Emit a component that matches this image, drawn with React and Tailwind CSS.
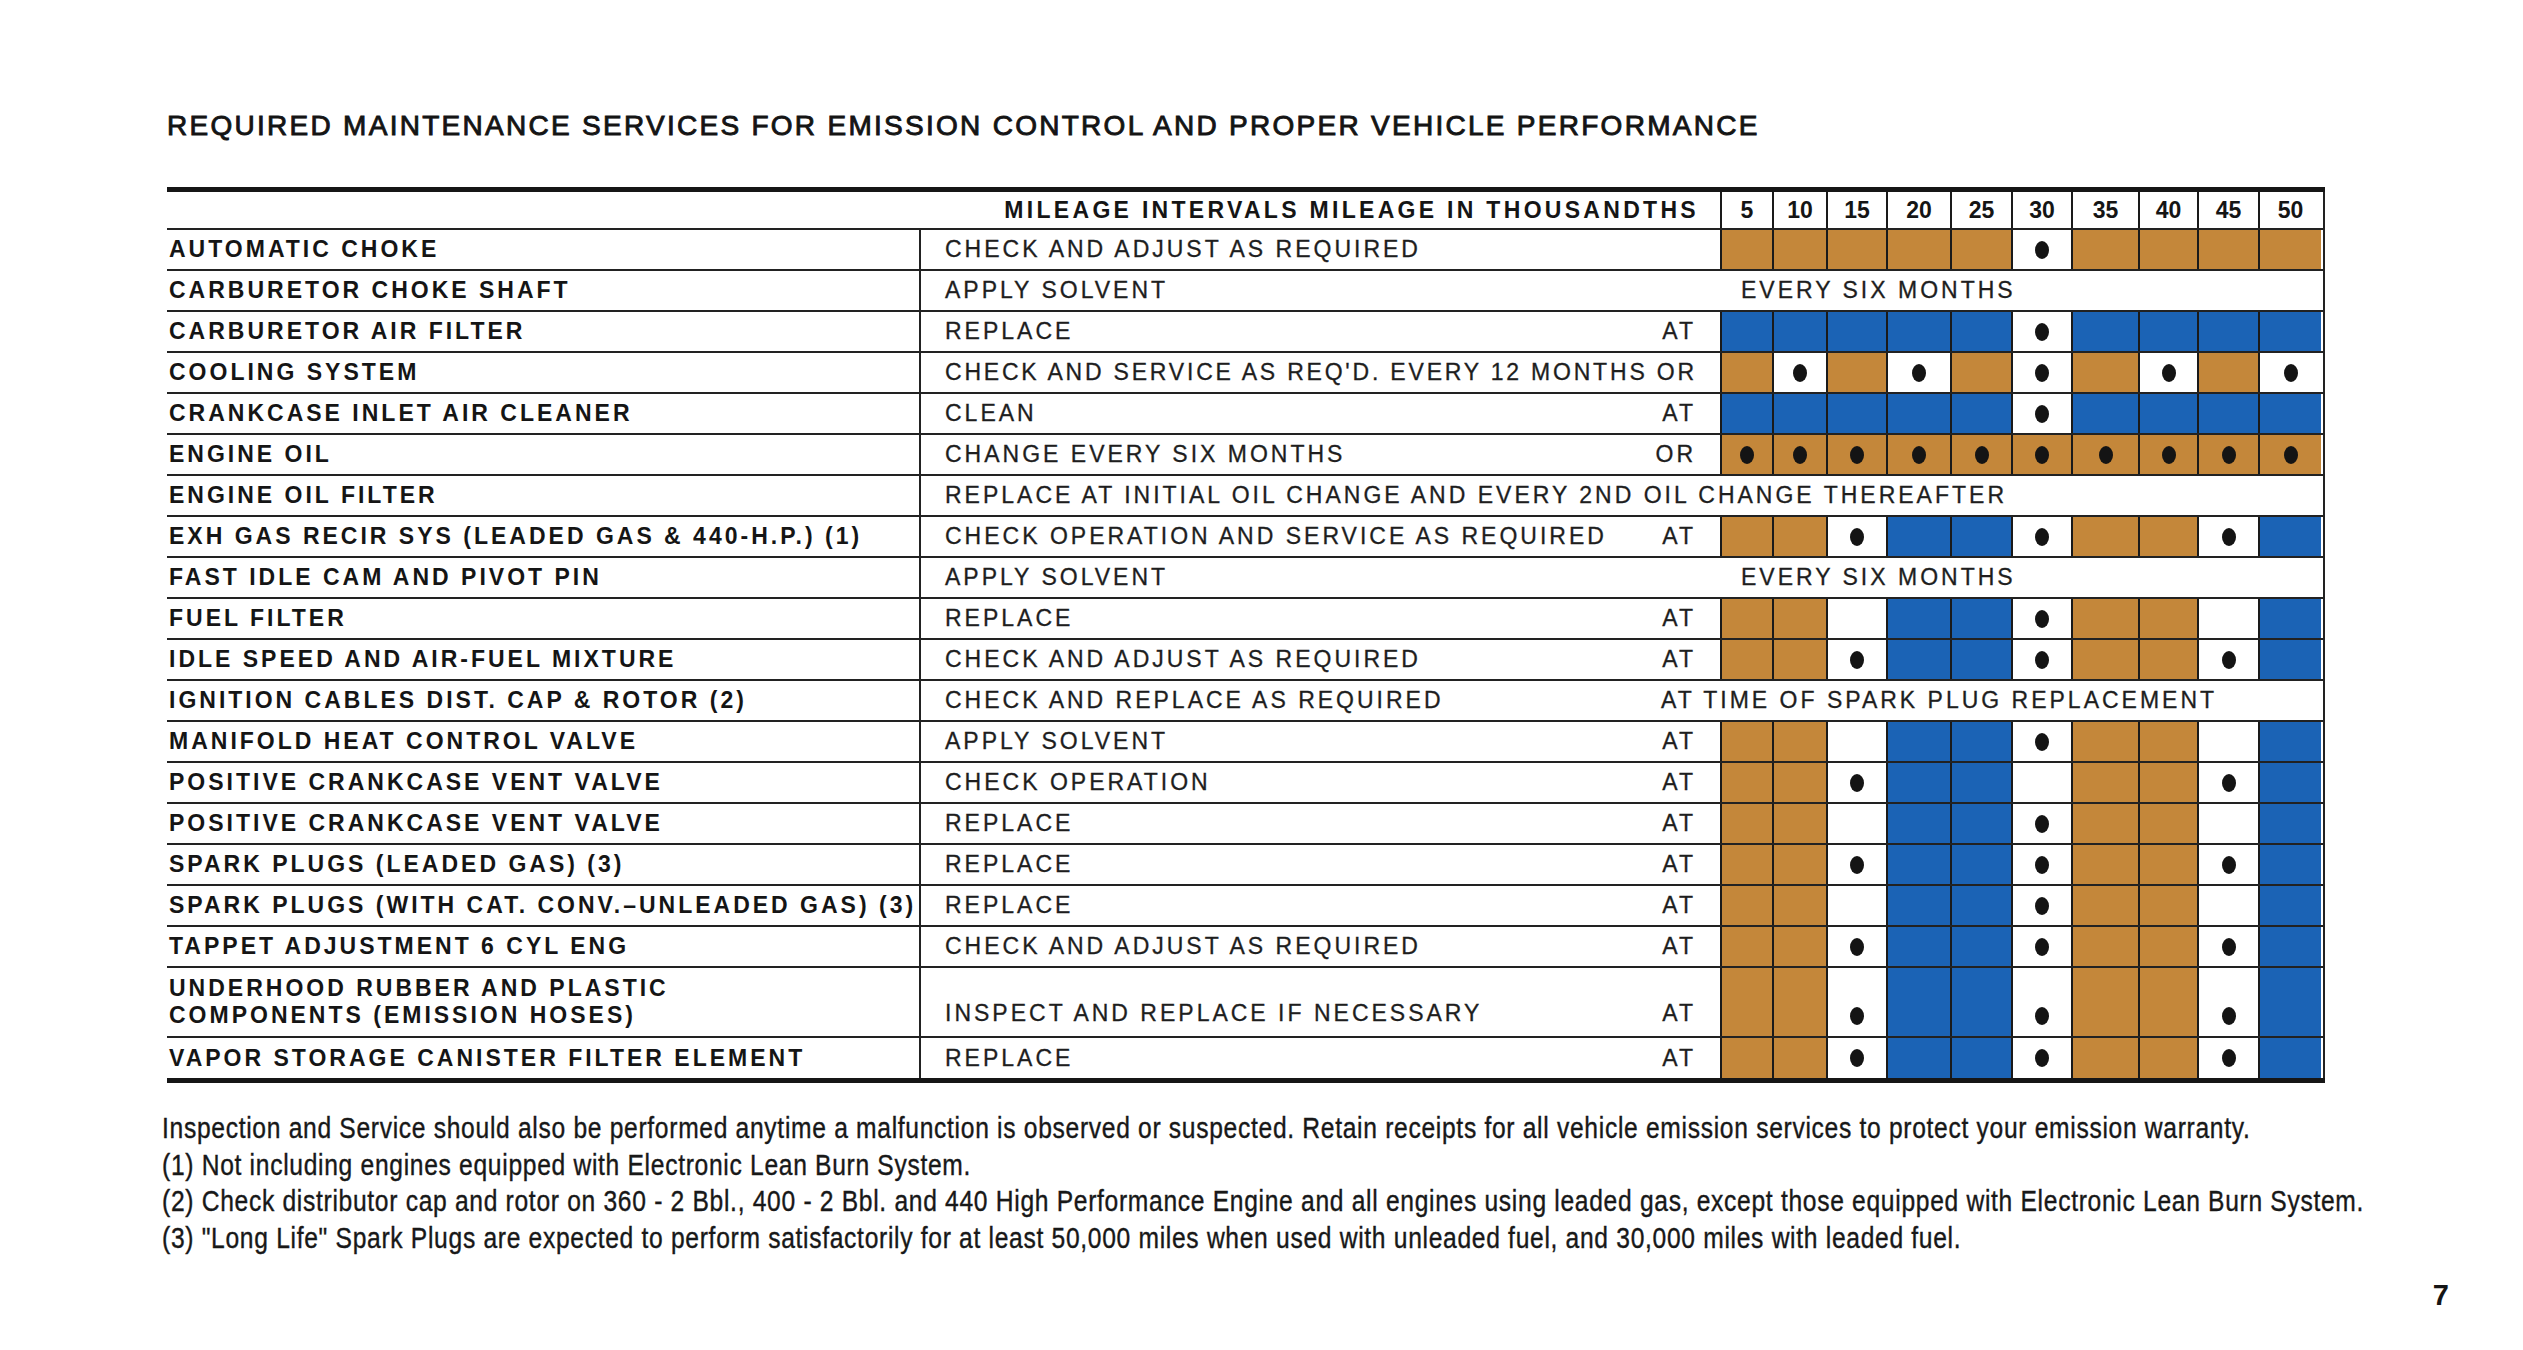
const COLS = [
  "w-[52px]",
  "w-[54px]",
  "w-[60px]",
  "w-[64px]",
  "w-[61px]",
  "w-[60px]",
  "w-[67px]",
  "w-[59px]",
  "w-[61px]",
  "w-[63px]",
];
const MILES = ["5", "10", "15", "20", "25", "30", "35", "40", "45", "50"];

// T tan, B blue, W white, D white with dot, O tan with dot
const FILL = {
  T: "bg-[#c4873a]",
  B: "bg-[#1b63b5]",
  W: "bg-white",
  D: "bg-white",
  O: "bg-[#c4873a]",
};

const ROWS = [
  { item: "AUTOMATIC CHOKE", desc: "CHECK AND ADJUST AS REQUIRED", cells: "TTTTTDTTTT" },
  { item: "CARBURETOR CHOKE SHAFT", desc: "APPLY SOLVENT", every: "EVERY SIX MONTHS" },
  { item: "CARBURETOR AIR FILTER", desc: "REPLACE", at: "AT", cells: "BBBBBDBBBB" },
  {
    item: "COOLING SYSTEM",
    desc: "CHECK AND SERVICE AS REQ'D. EVERY 12 MONTHS OR",
    cells: "TDTDTDTDTD",
    tight: true,
  },
  { item: "CRANKCASE INLET AIR CLEANER", desc: "CLEAN", at: "AT", cells: "BBBBBDBBBB" },
  { item: "ENGINE OIL", desc: "CHANGE EVERY SIX MONTHS", at: "OR", cells: "OOOOOOOOOO" },
  { item: "ENGINE OIL FILTER", full: "REPLACE AT INITIAL OIL CHANGE AND EVERY 2ND OIL CHANGE THEREAFTER" },
  { item: "EXH GAS RECIR SYS (LEADED GAS & 440-H.P.) (1)", desc: "CHECK OPERATION AND SERVICE AS REQUIRED", at: "AT", cells: "TTDBBDTTDB" },
  { item: "FAST IDLE CAM AND PIVOT PIN", desc: "APPLY SOLVENT", every: "EVERY SIX MONTHS" },
  { item: "FUEL FILTER", desc: "REPLACE", at: "AT", cells: "TTWBBDTTWB" },
  { item: "IDLE SPEED AND AIR-FUEL MIXTURE", desc: "CHECK AND ADJUST AS REQUIRED", at: "AT", cells: "TTDBBDTTDB" },
  { item: "IGNITION CABLES DIST. CAP & ROTOR (2)", desc: "CHECK AND REPLACE AS REQUIRED", tail: "AT TIME OF SPARK PLUG REPLACEMENT" },
  { item: "MANIFOLD HEAT CONTROL VALVE", desc: "APPLY SOLVENT", at: "AT", cells: "TTWBBDTTWB" },
  { item: "POSITIVE CRANKCASE VENT VALVE", desc: "CHECK OPERATION", at: "AT", cells: "TTDBBWTTDB" },
  { item: "POSITIVE CRANKCASE VENT VALVE", desc: "REPLACE", at: "AT", cells: "TTWBBDTTWB" },
  { item: "SPARK PLUGS (LEADED GAS) (3)", desc: "REPLACE", at: "AT", cells: "TTDBBDTTDB" },
  { item: "SPARK PLUGS (WITH CAT. CONV.–UNLEADED GAS) (3)", desc: "REPLACE", at: "AT", cells: "TTWBBDTTWB" },
  { item: "TAPPET ADJUSTMENT 6 CYL ENG", desc: "CHECK AND ADJUST AS REQUIRED", at: "AT", cells: "TTDBBDTTDB" },
  {
    item: ["UNDERHOOD RUBBER AND PLASTIC", "COMPONENTS (EMISSION HOSES)"],
    desc: "INSPECT AND REPLACE IF NECESSARY",
    at: "AT",
    cells: "TTDBBDTTDB",
    tall: true,
  },
  { item: "VAPOR STORAGE CANISTER FILTER ELEMENT", desc: "REPLACE", at: "AT", cells: "TTDBBDTTDB", last: true },
];

const Dot = () => <div className="w-[14px] h-[18px] rounded-[50%] bg-[#141414]" />;

const Row = ({ r }) => {
  const height = r.tall ? "h-[70px]" : r.last ? "h-[40px]" : "h-[41px]";
  const border = r.last ? "" : "border-b-2 border-[#222]";
  const itemLines = Array.isArray(r.item) ? r.item : [r.item];
  const descText = "text-[23px] text-[#1e1e1e] whitespace-nowrap [-webkit-text-stroke:0.3px_#1e1e1e]";

  return (
    <div className={`flex ${height} ${border}`}>
      <div className="w-[752px] pl-[2px] flex flex-col justify-center font-bold text-[23px] leading-[27px] tracking-[3px] text-[#151515] whitespace-nowrap">
        {itemLines.map((line) => (
          <div key={line}>{line}</div>
        ))}
      </div>

      {r.full ? (
        <div className={`flex-1 border-l-2 border-r-2 border-[#222] pl-[24px] flex items-center tracking-[3px] ${descText}`}>
          {r.full}
        </div>
      ) : r.tail ? (
        <div className={`flex-1 border-l-2 border-r-2 border-[#222] pl-[24px] flex items-center tracking-[3px] ${descText}`}>
          <div className="w-[716px]">{r.desc}</div>
          <div>{r.tail}</div>
        </div>
      ) : (
        <>
          <div
            className={`w-[801px] border-l-2 border-[#222] pl-[24px] pr-[24px] flex justify-between ${descText} ${
              r.tight ? "tracking-[2.8px]" : "tracking-[3px]"
            } ${r.tall ? "items-end pb-[6px]" : "items-center"}`}
          >
            <span>{r.desc}</span>
            {r.at && <span>{r.at}</span>}
          </div>
          {r.every ? (
            <div className={`w-[605px] border-r-2 border-[#222] pl-[21px] flex items-center tracking-[3px] ${descText}`}>
              {r.every}
            </div>
          ) : (
            <div className="w-[605px] flex border-r-2 border-[#222]">
              {r.cells.split("").map((c, i) => (
                <div
                  key={i}
                  className={`${COLS[i]} ${FILL[c]} border-l-2 border-[#1a1a1a] flex justify-center ${
                    r.tall ? "items-end pb-[11px]" : "items-center"
                  }`}
                >
                  {(c === "D" || c === "O") && <Dot />}
                </div>
              ))}
            </div>
          )}
        </>
      )}
    </div>
  );
};

const App = () => {
  return (
    <div className="w-[2523px] h-[1350px] bg-white font-['Liberation_Sans',Arial,sans-serif] text-[#151515] overflow-hidden">
      <div className="pl-[167px] pt-[108px]">
        <h1 className="h-[36px] leading-[36px] text-[28px] tracking-[2.28px] text-[#141414] whitespace-nowrap [-webkit-text-stroke:0.9px_#141414]">
          REQUIRED MAINTENANCE SERVICES FOR EMISSION CONTROL AND PROPER VEHICLE PERFORMANCE
        </h1>

        <div className="mt-[43px] w-[2158px] border-t-[5px] border-b-[5px] border-[#161616]">
          <div className="flex h-[38px] border-b-2 border-[#222]">
            <div className="w-[1553px] flex items-center justify-end pr-[21px] font-bold text-[23px] tracking-[3.3px] whitespace-nowrap">
              MILEAGE INTERVALS MILEAGE IN THOUSANDTHS
            </div>
            <div className="w-[605px] flex border-r-2 border-[#222]">
              {MILES.map((m, i) => (
                <div
                  key={m}
                  className={`${COLS[i]} border-l-2 border-[#1a1a1a] flex items-center justify-center font-bold text-[23px]`}
                >
                  {m}
                </div>
              ))}
            </div>
          </div>
          {ROWS.map((r, i) => (
            <Row key={i} r={r} />
          ))}
        </div>

        <div className="mt-[27px] -ml-[5px] origin-left scale-x-[0.82] text-[30px] leading-[36.7px] tracking-[0.85px] text-[#181818] whitespace-nowrap [-webkit-text-stroke:0.4px_#181818]">
          <p>
            Inspection and Service should also be performed anytime a malfunction is observed or suspected. Retain
            receipts for all vehicle emission services to protect your emission warranty.
          </p>
          <p>(1) Not including engines equipped with Electronic Lean Burn System.</p>
          <p>
            (2) Check distributor cap and rotor on 360 - 2 Bbl., 400 - 2 Bbl. and 440 High Performance Engine and all
            engines using leaded gas, except those equipped with Electronic Lean Burn System.
          </p>
          <p>
            (3) "Long Life" Spark Plugs are expected to perform satisfactorily for at least 50,000 miles when used with
            unleaded fuel, and 30,000 miles with leaded fuel.
          </p>
        </div>
      </div>

      <div className="flex justify-end pr-[74px] mt-[20px] font-bold text-[29px] leading-[36px]">7</div>
    </div>
  );
};

export default App;
